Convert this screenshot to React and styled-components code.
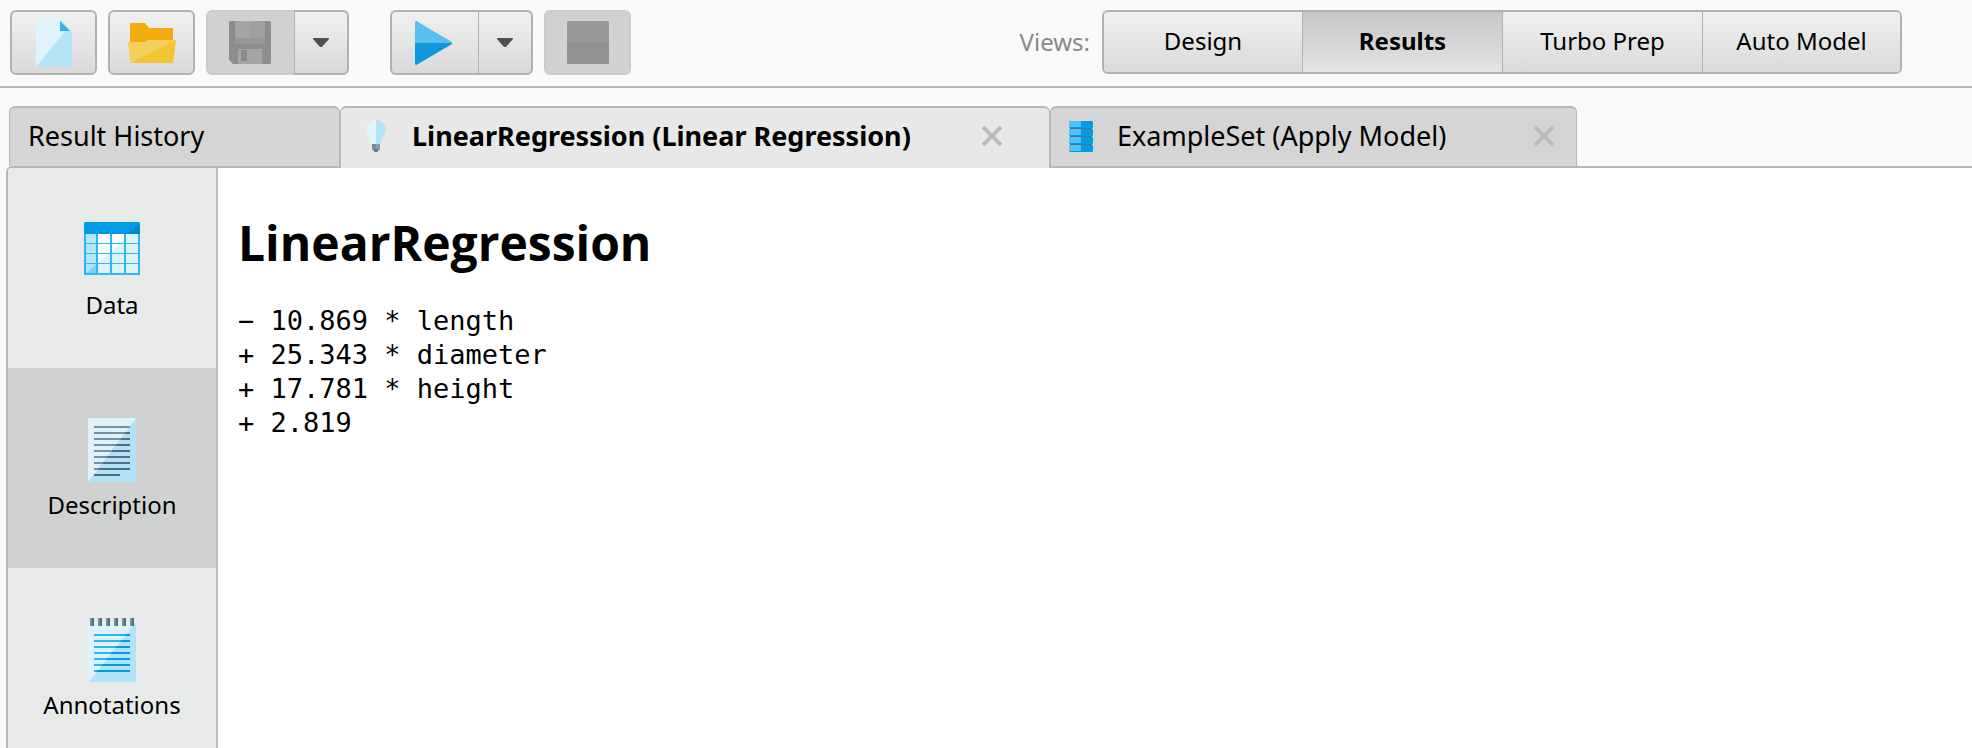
import React, { useState } from "react";
import styled, { createGlobalStyle, css } from "styled-components";

const GlobalStyle = createGlobalStyle`
  * { box-sizing: border-box; }
  body {
    margin: 0;
    background: #fafafa;
    color: #000;
    font-family: "Noto Sans", "Open Sans", sans-serif;
    font-size: 24px;
    line-height: 32px;
  }
  button { font: inherit; color: inherit; cursor: pointer; }
`;

const line = "#b8b8b8";
const raised = "linear-gradient(#f0f0f0, #dadada)";
const pressed = "linear-gradient(#c6c6c6, #e4e4e4)";

const Page = styled.div`
  height: 100vh;
  display: flex;
  flex-direction: column;
  overflow: hidden;
`;

const Toolbar = styled.header`
  flex: none;
  display: flex;
  align-items: flex-start;
  justify-content: space-between;
  padding: 10px 70px 11px 10px;
  border-bottom: 2px solid ${line};
`;

const Tools = styled.div`
  display: flex;
  gap: 11px;
`;

const ToolGroup = styled.div`
  display: flex;
  margin-right: ${(p) => (p.$spaced ? "30px" : "0")};
`;

const ToolButton = styled.button`
  width: 87px;
  height: 65px;
  padding: 0;
  display: flex;
  align-items: center;
  justify-content: center;
  border: 2px solid #b1b1b1;
  border-radius: 6px;
  background: ${raised};

  &:disabled {
    background: #d1d1d1;
    border-color: #cbcbcb;
    cursor: default;
  }

  ${(p) => p.$joined === "left" && css`
    width: 88px;
    padding-right: 2px;
    border-right: 0;
    border-radius: 6px 0 0 6px;
  `}
  ${(p) => p.$joined === "right" && css`
    width: 55px;
    border-left-width: 1px;
    border-radius: 0 6px 6px 0;
  `}
`;

const Views = styled.div`
  display: flex;
  align-items: center;
  gap: 12px;
`;

const ViewsLabel = styled.span`
  color: #8a8a8a;
`;

const Segments = styled.div`
  display: flex;
  height: 64px;
  border: 2px solid #b1b1b1;
  border-radius: 6px;
  overflow: hidden;
`;

const Segment = styled.button`
  width: 200px;
  padding: 0 0 2px;
  border: 0;
  background: ${(p) => (p.$active ? pressed : raised)};
  font-weight: ${(p) => (p.$active ? 700 : 400)};

  &:first-child, &:last-child { width: 198px; }
  & + & { border-left: 1px solid #b1b1b1; }
`;

const TabStrip = styled.div`
  flex: none;
  display: flex;
  align-items: flex-start;
  margin: 18px 0 -2px;
  padding-left: 9px;
`;

const Tab = styled.div`
  position: relative;
  z-index: ${(p) => (p.$active ? 1 : 0)};
  display: flex;
  align-items: center;
  height: ${(p) => (p.$active ? "62px" : "60px")};
  padding: ${(p) => (p.$active ? "0 43px 4px 0" : "0 18px 2px 0")};
  border: solid ${line};
  border-width: 2px 1px 0;
  border-radius: 6px 6px 0 0;
  background: ${(p) => (p.$active ? "#e8e8e8" : "#d5d5d5")};
`;

const TabButton = styled.button`
  display: flex;
  align-items: center;
  height: 100%;
  width: ${(p) => p.$width};
  padding: 0 0 0 ${(p) => (p.$active ? "23px" : "18px")};
  border: 0;
  background: none;
  font-size: 27px;
  font-weight: ${(p) => (p.$active ? 700 : 400)};
  white-space: nowrap;
`;

const TabIcon = styled.span`
  flex: none;
  display: flex;
  justify-content: center;
  width: 24px;
  margin-right: 24px;
`;

const CloseButton = styled.button`
  display: flex;
  padding: 4px;
  border: 0;
  background: none;
`;

const Workspace = styled.div`
  flex: 1;
  min-height: 0;
  display: flex;
  margin-left: 6px;
  border: solid ${line};
  border-width: 2px 0 0 2px;
  border-top-left-radius: 6px;
  background: #fff;
  overflow: hidden;
`;

const Sidebar = styled.nav`
  flex: none;
  width: 210px;
  border-right: 2px solid #bfbfbf;
  background: #e8eaea;
`;

const SideItem = styled.button`
  display: flex;
  flex-direction: column;
  align-items: center;
  width: 100%;
  height: 200px;
  padding: 50px 0 0;
  border: 0;
  background: ${(p) => (p.$active ? "#d0d2d1" : "transparent")};
`;

const SideIcon = styled.span`
  display: flex;
  align-items: center;
  height: 64px;
  margin-bottom: 7px;
`;

const Content = styled.main`
  flex: 1;
  min-width: 0;
  padding: 42px 20px;
`;

const Title = styled.h1`
  margin: 0 0 28px;
  font: 700 48px/66px "Open Sans", "Noto Sans", sans-serif;
`;

const Formula = styled.pre`
  margin: 0;
  font: 27px/34px "DejaVu Sans Mono", "Liberation Mono", monospace;
`;

const NewIcon = () => (
  <svg width="36" height="48" viewBox="0 0 36 48" aria-hidden="true">
    <path d="M0 0H24L36 13V48H0Z" fill="#b5e4f8" />
    <path d="M0 0H24V12H29L0 48Z" fill="#e1f4fd" />
    <path d="M24 2L34 12H24Z" fill="#2fb2ef" />
  </svg>
);

const OpenIcon = () => (
  <svg width="48" height="40" viewBox="0 0 48 40" aria-hidden="true">
    <path d="M2 1Q2 0 3 0H17L21 5H45V30H2Z" fill="#f3ac10" />
    <path d="M0 19H17L21 17H48L45 40H3Z" fill="#f3c534" />
    <path d="M0 19H17L21 17H48L3 40Z" fill="#f5cf5c" />
  </svg>
);

const SaveIcon = () => (
  <svg width="42" height="43" viewBox="0 0 42 43" aria-hidden="true">
    <path d="M1 0H41L42 1V42L41 43H4L0 39V1Z" fill="#8d8d8d" />
    <path d="M6 0H36V22H6Z" fill="#a5a5a5" />
    <path d="M21 0H36V17H21Z" fill="#9f9f9f" />
    <path d="M6 17H36V23H6Z" fill="#979797" />
    <path d="M9 28H33V43H9Z" fill="#a5a5a5" />
    <path d="M12 29H18V40H12Z" fill="#8a8a8a" />
  </svg>
);

const PlayIcon = () => (
  <svg width="38" height="44" viewBox="0 0 38 44" aria-hidden="true">
    <path d="M0 22V1Q1-1 3 1L37 21V22Z" fill="#58c0ef" />
    <path d="M0 22V43Q1 45 3 43L37 23V22Z" fill="#1096da" />
  </svg>
);

const StopIcon = () => (
  <svg width="42" height="43" viewBox="0 0 42 43" aria-hidden="true">
    <rect width="42" height="43" rx="1" fill="#919191" />
    <path d="M1 0H41L42 1V21H0V1Z" fill="#999" />
  </svg>
);

const Caret = () => (
  <svg width="16" height="10" viewBox="0 0 16 10" aria-hidden="true">
    <path d="M0 0H16V1L9 9H7L0 1Z" fill="#505050" />
  </svg>
);

const BulbIcon = () => (
  <svg width="20" height="32" viewBox="0 0 20 32" aria-hidden="true">
    <path d="M10 0A10 10 0 0 0 1 14C3 18 5 19 5 24H10Z" fill="#e1f4fd" />
    <path d="M10 0A10 10 0 0 1 19 14C17 18 15 19 15 24H10Z" fill="#b1e3fb" />
    <path d="M6 24H14V29L11 32H9L6 29Z" fill="#78909c" />
    <path d="M10 24H14V29L11 32H10Z" fill="#8ba0aa" />
    <path d="M7 29H13L11 32H9Z" fill="#607d8b" />
  </svg>
);

const StackIcon = () => (
  <svg width="24" height="31" viewBox="0 0 24 31" aria-hidden="true">
    <path d="M1 6H23V26H1Z" fill="#546e7a" />
    {[0, 8, 16, 24].map((y) => (
      <g key={y}>
        <rect y={y} width="24" height="7" rx="1" fill="#039be5" />
        <path d={`M1 ${y}H12V${y + 6}H0V${y + 1}Z`} fill="#4fc3f7" />
      </g>
    ))}
  </svg>
);

const CloseIcon = () => (
  <svg width="20" height="20" viewBox="0 0 20 20" aria-hidden="true">
    <path d="M1 1L19 19M19 1L1 19" stroke="#bbb" strokeWidth="4" />
  </svg>
);

const TableIcon = () => (
  <svg width="56" height="56" viewBox="0 0 56 56" aria-hidden="true">
    <path d="M0 12H56V53H0Z" fill="#29b6f6" />
    {[12, 22, 32, 42].map((y) => (
      <g key={y} fill="#fff">
        <rect x="2" y={y} width="10" height="9" fill="#b3e5fc" />
        <rect x="14" y={y} width="12" height="9" />
        <rect x="28" y={y} width="12" height="9" />
        <rect x="42" y={y} width="12" height="9" />
      </g>
    ))}
    <path d="M1 53L46 12H56V53Z" fill="#4fc3f7" fillOpacity=".2" />
    <path d="M2 51L12 42V51Z" fill="#4fc3f7" fillOpacity=".45" />
    <path d="M1 0H55L56 1V12H0V1Z" fill="#039be5" />
    <path d="M56 1V12H43Z" fill="#0288d1" />
  </svg>
);

const TextIcon = () => (
  <svg width="48" height="64" viewBox="0 0 48 64" aria-hidden="true">
    <path d="M0 0H48V64H0Z" fill="#b1e2fa" />
    {[8, 14, 20, 26, 32, 38, 44, 50, 56].map((y) => (
      <rect key={y} x="6" y={y} width={y === 56 ? 26 : 36} height="2" fill="#546e7a" />
    ))}
    <path d="M0 0H48L0 64Z" fill="#dff2fc" />
    <clipPath id="textUpper"><path d="M0 0H48L0 64Z" /></clipPath>
    <g clipPath="url(#textUpper)" fill="#78909c">
      {[8, 14, 20, 26, 32, 38, 44, 50, 56].map((y) => (
        <rect key={y} x="6" y={y} width="36" height="2" />
      ))}
    </g>
  </svg>
);

const NotesIcon = () => (
  <svg width="48" height="64" viewBox="0 0 48 64" aria-hidden="true">
    <path d="M0 4H48V63L47 64H1L0 63Z" fill="#b1e2fa" />
    <path d="M0 4H48L1 64L0 63Z" fill="#dff2fc" />
    {[16, 22, 28, 34, 40, 46, 52].map((y) => (
      <rect key={y} x="6" y={y} width="36" height="2" fill="#039be5" />
    ))}
    <clipPath id="notesUpper"><path d="M0 4H48L0 64Z" /></clipPath>
    <g clipPath="url(#notesUpper)" fill="#29b6f6">
      {[16, 22, 28, 34, 40, 46, 52].map((y) => (
        <rect key={y} x="6" y={y} width="36" height="2" />
      ))}
    </g>
    {[2, 10, 18, 26, 34, 42].map((x) => (
      <g key={x}>
        <rect x={x} width="4" height="8" rx="1" fill="#78909c" />
        <rect x={x + 2} width="2" height="8" fill="#546e7a" />
      </g>
    ))}
  </svg>
);

const viewNames = ["Design", "Results", "Turbo Prep", "Auto Model"];

const tabs = [
  { id: "history", label: "Result History", width: "311px" },
  { id: "model", label: "LinearRegression (Linear Regression)", icon: BulbIcon, width: "637px" },
  { id: "examples", label: "ExampleSet (Apply Model)", icon: StackIcon, width: "479px" },
];

const sections = [
  { label: "Data", icon: TableIcon },
  { label: "Description", icon: TextIcon },
  { label: "Annotations", icon: NotesIcon },
];

const formula = `− 10.869 * length
+ 25.343 * diameter
+ 17.781 * height
+ 2.819`;

export default function App() {
  const [view, setView] = useState("Results");
  const [tab, setTab] = useState("model");
  const [section, setSection] = useState("Description");

  return (
    <Page>
      <GlobalStyle />
      <Toolbar>
        <Tools>
          <ToolButton aria-label="New process"><NewIcon /></ToolButton>
          <ToolButton aria-label="Open process"><OpenIcon /></ToolButton>
          <ToolGroup $spaced>
            <ToolButton $joined="left" disabled aria-label="Save process"><SaveIcon /></ToolButton>
            <ToolButton $joined="right" aria-label="Save options"><Caret /></ToolButton>
          </ToolGroup>
          <ToolGroup>
            <ToolButton $joined="left" aria-label="Run process"><PlayIcon /></ToolButton>
            <ToolButton $joined="right" aria-label="Run options"><Caret /></ToolButton>
          </ToolGroup>
          <ToolButton disabled aria-label="Stop process"><StopIcon /></ToolButton>
        </Tools>
        <Views>
          <ViewsLabel>Views:</ViewsLabel>
          <Segments>
            {viewNames.map((name) => (
              <Segment key={name} $active={name === view} onClick={() => setView(name)}>
                {name}
              </Segment>
            ))}
          </Segments>
        </Views>
      </Toolbar>

      <TabStrip>
        {tabs.map(({ id, label, icon: Icon, width }) => (
          <Tab key={id} $active={id === tab}>
            <TabButton $active={id === tab} $width={width} onClick={() => setTab(id)}>
              {Icon && <TabIcon><Icon /></TabIcon>}
              {label}
            </TabButton>
            {Icon && <CloseButton aria-label={`Close ${label}`}><CloseIcon /></CloseButton>}
          </Tab>
        ))}
      </TabStrip>

      <Workspace>
        <Sidebar>
          {sections.map(({ label, icon: Icon }) => (
            <SideItem key={label} $active={label === section} onClick={() => setSection(label)}>
              <SideIcon><Icon /></SideIcon>
              {label}
            </SideItem>
          ))}
        </Sidebar>
        <Content>
          <Title>LinearRegression</Title>
          <Formula>{formula}</Formula>
        </Content>
      </Workspace>
    </Page>
  );
}
